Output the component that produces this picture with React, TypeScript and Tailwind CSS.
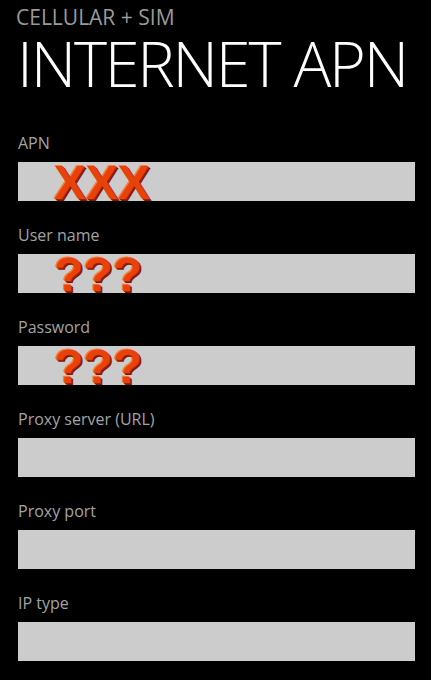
import React from "react";

const wordArt =
  "font-['Liberation_Sans',Arial,sans-serif] font-bold text-[48px] leading-none text-[#e8420c] [text-shadow:1px_1px_0_#a02000,2px_2px_0_#7a1800,-1px_-1px_0_#ff7a48]";

function Field({ label, value }: { label: string; value?: string }) {
  return (
    <div className="flex flex-col">
      <div className="text-[16px] leading-[20px] text-[#a3a3a3]">{label}</div>
      <div className="mt-[9px] h-[39px] bg-[#cccccc] flex items-start pl-[36px]">
        {value ? <span className={`${wordArt} -mt-[3px]`}>{value}</span> : null}
      </div>
    </div>
  );
}

export default function App() {
  return (
    <div className="min-h-screen bg-black font-['Open_Sans','Noto_Sans',sans-serif]">
      <div className="px-[16px] pt-[5px]">
        <div className="text-[21px] leading-[24px] text-[#9a9a9a] whitespace-nowrap">CELLULAR + SIM</div>
        <div className="mt-[6px] text-[63px] leading-[56px] font-light tracking-[-2.2px] text-white whitespace-nowrap ml-[1px]">
          INTERNET APN
        </div>
      </div>
      <div className="pl-[18px] pr-[16px] mt-[42px] flex flex-col gap-[24px]">
        <Field label="APN" value="XXX" />
        <Field label="User name" value="???" />
        <Field label="Password" value="???" />
        <Field label="Proxy server (URL)" />
        <Field label="Proxy port" />
        <Field label="IP type" />
      </div>
    </div>
  );
}
